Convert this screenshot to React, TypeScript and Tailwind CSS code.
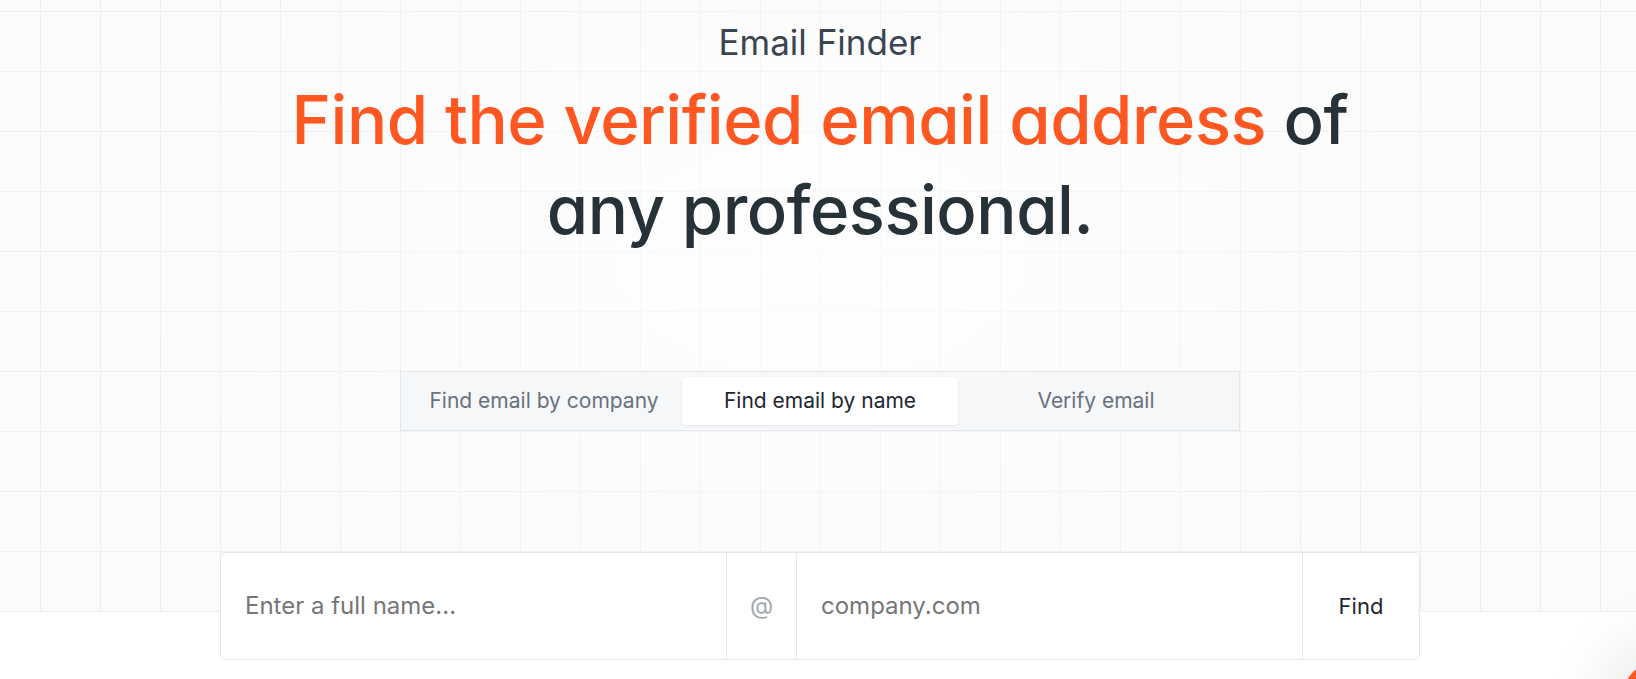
import React, { useState } from 'react';

const tabs = ['Find email by company', 'Find email by name', 'Verify email'];

export default function App() {
    const [active, setActive] = useState(1);

    return (
        <div
            className="relative min-h-[679px] overflow-hidden bg-white font-['Inter',sans-serif] bg-[linear-gradient(to_bottom,transparent_612px,#ffffff_612px),radial-gradient(ellipse_700px_420px_at_50%_38%,rgba(255,255,255,0.7),rgba(255,255,255,0)),linear-gradient(to_right,#edeff3_1px,transparent_1px),linear-gradient(to_bottom,#edeff3_1px,transparent_1px),linear-gradient(#fbfbfc,#fbfbfc)] bg-[length:100%_100%,100%_100%,60px_60px,60px_60px,100%_612px] bg-[position:0_0,0_0,40px_11px,40px_11px,0_0] [background-repeat:no-repeat,no-repeat,repeat,repeat,no-repeat]"
        >
            <div className="flex flex-col items-center pl-[4px] pt-[22px]">
                <p className="text-[35px] leading-[41px] text-[#3a4551]">Email Finder</p>

                <h1 className="mt-[12px] text-center text-[67px] font-medium leading-[90px] tracking-[-0.5px] text-[#263238] [font-feature-settings:'cv11']">
                    <span className="text-[#ff5722]">Find the verified email address</span> of
                    <br />
                    any professional.
                </h1>

                <div className="mt-[116px] grid h-[60px] w-[840px] grid-cols-3 border border-[#e3e6eb] bg-[#f6f7f9] p-[5px]">
                    {tabs.map((t, i) => (
                        <button
                            key={t}
                            onClick={() => setActive(i)}
                            className={
                                i === active
                                    ? 'rounded-[4px] bg-white text-[21px] text-[#1f2630] shadow-[0_1px_3px_rgba(0,0,0,0.08)]'
                                    : 'text-[21px] text-[#69727d]'
                            }
                        >
                            {t}
                        </button>
                    ))}
                </div>

                <div className="mt-[121px] flex h-[108px] w-[1200px] overflow-hidden rounded-[6px] border border-[#e3e6eb] bg-white">
                    <input
                        className="w-[505px] px-[24px] text-[24px] text-[#1f2630] outline-none placeholder:text-[#767676]"
                        placeholder="Enter a full name..."
                    />
                    <div className="flex w-[71px] items-center justify-center border-x border-[#e6e8ec] text-[24px] text-[#a3a8b0]">
                        @
                    </div>
                    <input
                        className="flex-1 px-[24px] text-[24px] text-[#1f2630] outline-none placeholder:text-[#767676]"
                        placeholder="company.com"
                    />
                    <button className="w-[117px] border-l border-[#e6e8ec] text-[22px] text-[#1f2630]">Find</button>
                </div>
            </div>

            <div className="absolute left-[1618px] top-[655px] h-[110px] w-[110px] rounded-full bg-[#ff5722] shadow-[0_0_60px_20px_rgba(0,0,0,0.08)]" />
        </div>
    );
}
